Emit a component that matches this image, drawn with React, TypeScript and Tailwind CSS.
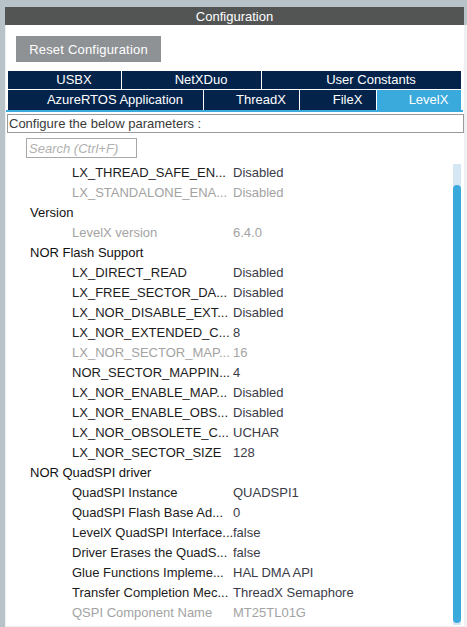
import React from 'react';

type Row =
  | { kind: 'head'; label: string }
  | { kind: 'param'; label: string; value: string; muted?: boolean };

const rows: Row[] = [
  { kind: 'param', label: 'LX_THREAD_SAFE_EN...', value: 'Disabled' },
  { kind: 'param', label: 'LX_STANDALONE_ENA...', value: 'Disabled', muted: true },
  { kind: 'head', label: 'Version' },
  { kind: 'param', label: 'LevelX version', value: '6.4.0', muted: true },
  { kind: 'head', label: 'NOR Flash Support' },
  { kind: 'param', label: 'LX_DIRECT_READ', value: 'Disabled' },
  { kind: 'param', label: 'LX_FREE_SECTOR_DA...', value: 'Disabled' },
  { kind: 'param', label: 'LX_NOR_DISABLE_EXT...', value: 'Disabled' },
  { kind: 'param', label: 'LX_NOR_EXTENDED_C...', value: '8' },
  { kind: 'param', label: 'LX_NOR_SECTOR_MAP...', value: '16', muted: true },
  { kind: 'param', label: 'NOR_SECTOR_MAPPIN...', value: '4' },
  { kind: 'param', label: 'LX_NOR_ENABLE_MAP...', value: 'Disabled' },
  { kind: 'param', label: 'LX_NOR_ENABLE_OBS...', value: 'Disabled' },
  { kind: 'param', label: 'LX_NOR_OBSOLETE_C...', value: 'UCHAR' },
  { kind: 'param', label: 'LX_NOR_SECTOR_SIZE', value: '128' },
  { kind: 'head', label: 'NOR QuadSPI driver' },
  { kind: 'param', label: 'QuadSPI Instance', value: 'QUADSPI1' },
  { kind: 'param', label: 'QuadSPI Flash Base Ad...', value: '0' },
  { kind: 'param', label: 'LevelX QuadSPI Interface...', value: 'false' },
  { kind: 'param', label: 'Driver Erases the QuadS...', value: 'false' },
  { kind: 'param', label: 'Glue Functions Impleme...', value: 'HAL DMA API' },
  { kind: 'param', label: 'Transfer Completion Mec...', value: 'ThreadX Semaphore' },
  { kind: 'param', label: 'QSPI Component Name', value: 'MT25TL01G', muted: true },
];

function Tab({ label, width, active }: { label: string; width: string; active?: boolean }) {
  return (
    <div
      className={`${width} flex items-center justify-center pl-[19px] text-white ${
        active ? 'bg-[#3aa9dc]' : 'bg-[#03234b]'
      }`}
    >
      {label}
    </div>
  );
}

export default function App() {
  return (
    <div
      className="w-[467px] h-[627px] overflow-hidden bg-[#b8c3c9] pt-[7px] pl-[5px] flex flex-col text-[13px] leading-[16px]"
      style={{ fontFamily: '"Liberation Sans", Arial, sans-serif' }}
    >
      {/* Title bar */}
      <div className="w-[459px] h-[18px] shrink-0 bg-[#535554] text-white flex items-center justify-center pt-[2px]">
        Configuration
      </div>

      {/* Panel body */}
      <div className="flex-1 bg-[#eef0f2] pl-[1px] pr-[3px] pb-[1px] flex">
        <div className="flex-1 bg-white flex flex-col">
          {/* Reset button */}
          <div className="pl-[10px] pt-[11px]">
            <div className="w-[145px] h-[26px] bg-[#8e9295] text-white flex items-center justify-center pt-px tracking-[0.2px]">
              Reset Configuration
            </div>
          </div>

          {/* Tabs */}
          <div className="mt-[9px] ml-[2px] w-[453px] flex flex-col gap-px">
            <div className="h-[18px] flex gap-px">
              <Tab label="USBX" width="w-[113px]" />
              <Tab label="NetXDuo" width="w-[139px]" />
              <Tab label="User Constants" width="flex-1" />
            </div>
            <div className="h-[20px] flex gap-px">
              <Tab label="AzureRTOS Application" width="w-[195px]" />
              <Tab label="ThreadX" width="w-[95px]" />
              <Tab label="FileX" width="w-[76px]" />
              <Tab label="LevelX" width="flex-1" active />
            </div>
          </div>
          <div className="h-[2px] w-[457px] bg-[#3aa9dc]" />

          {/* Configure caption */}
          <div className="mt-[2px] ml-[1px] h-[19px] border border-[#9a9a9a] flex items-center pl-px text-[#3a3a3a]">
            Configure the below parameters :
          </div>

          {/* Search */}
          <div className="mt-[5px] ml-[20px] w-[111px] h-[20px] border border-[#a8a8a8] flex items-center pl-[2px] pt-px italic text-[#b0b0b0]">
            Search (Ctrl+F)
          </div>

          {/* Parameter list */}
          <div className="mt-[5px] flex-1 flex">
            <div className="flex-1 flex flex-col">
              {rows.map((r, i) =>
                r.kind === 'head' ? (
                  <div key={i} className="h-[20px] flex items-center pl-[24px] text-[#111]">
                    {r.label}
                  </div>
                ) : (
                  <div
                    key={i}
                    className={`h-[20px] flex items-center pl-[66px] whitespace-nowrap ${
                      r.muted ? 'text-[#a3a3a3]' : 'text-[#1c1c1c]'
                    }`}
                  >
                    <span className="w-[161px] shrink-0">{r.label}</span>
                    <span className={r.muted ? 'text-[#a3a3a3]' : 'text-[#3b3b47]'}>{r.value}</span>
                  </div>
                )
              )}
            </div>
            {/* Scrollbar */}
            <div className="w-[8px] mr-[3px] mt-px mb-[1px] bg-[#d6e7f4] flex flex-col">
              <div className="h-[21px]" />
              <div className="flex-1 bg-[#3aa9dc] rounded-[4px] mb-[2px]" />
            </div>
          </div>
        </div>
      </div>
    </div>
  );
}
